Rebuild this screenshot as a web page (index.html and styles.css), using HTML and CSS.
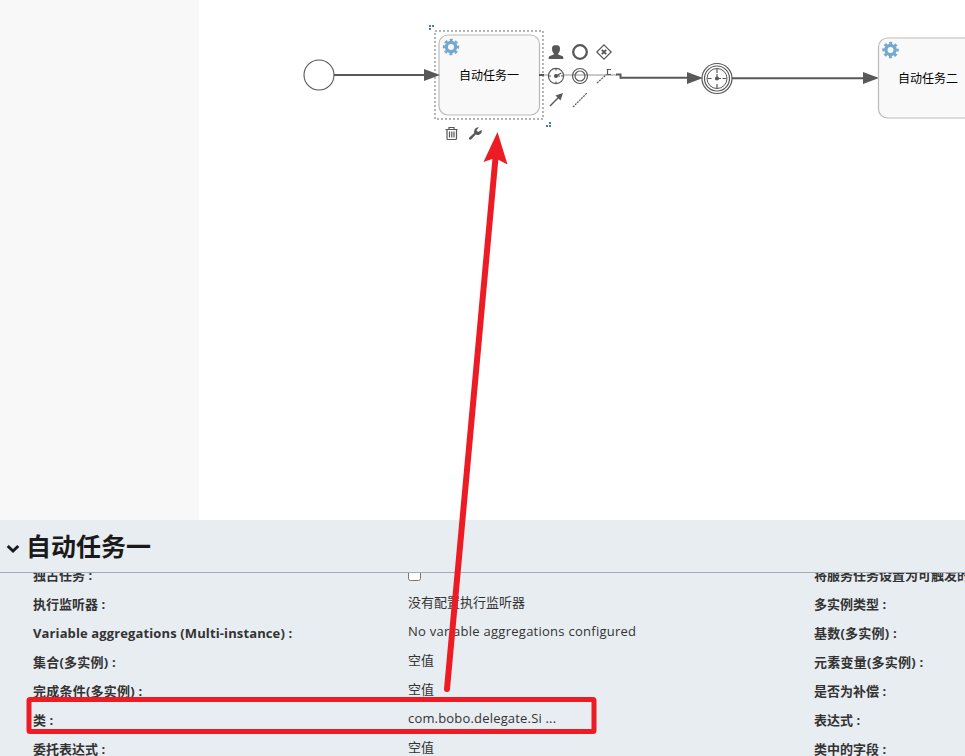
FILE: index.html
```
<!DOCTYPE html>
<html lang="zh-CN">
<head>
<meta charset="utf-8">
<title>自动任务一</title>
<link rel="stylesheet" href="styles.css">
</head>
<body>
<div class="editor">
  <main class="workspace">
    <aside class="palette"></aside>
    <svg class="canvas" viewBox="199 0 766 520" width="766" height="520">
      <defs>
        <g id="gear" fill="none" stroke="#72a7d0">
          <circle r="4.6" stroke-width="3.2"/>
          <circle r="7" stroke-width="2.4" stroke-dasharray="3 2.498" stroke-dashoffset="1.5"/>
        </g>
      </defs>
      <circle cx="319" cy="75" r="15" fill="#fff" stroke="#585858" stroke-width="1.1"/>
      <rect x="439" y="35" width="100.500" height="80" rx="9" class="task"/>
      <rect x="435" y="31" width="108" height="88" class="selection"/>
      <path d="M544 75h73" stroke="#b9b9b9" stroke-width="1.6"/>
      <g class="flow">
        <path d="M334 75H426M620 77.800H689M732 78.300H865"/>
        <path d="M424 69l16 6-16 6zM687 72l16 6-16 6zM863 72l16 6-16 6z" class="head"/>
        <path d="M539 75h5M616 74.600h4.500v4"/>
      </g>
      <use href="#gear" x="451" y="47"/>
      <text x="459" y="80">自动任务一</text>
      <path d="M429 25h2v2h-2zM432 25h2v2h-2zM429 28h2v2h-2zM549 122h2v2h-2zM546 125h2v2h-2zM549 125h2v2h-2z" fill="#4b7db5"/>
      <g class="thin">
        <circle cx="717" cy="78.500" r="15" fill="#fff"/>
        <circle cx="717" cy="78.500" r="12.500"/>
        <circle cx="717" cy="78.500" r="10" stroke-width="1"/>
        <path d="M717 69v4M717 84v4M707.500 78.500h4M722.500 78.500h4M717 74v4.500h4"/>
        <circle cx="717" cy="78.500" r="1.500" class="solid"/>
      </g>
      <rect x="878.500" y="38" width="100" height="80" rx="9" class="task"/>
      <use href="#gear" x="890.500" y="50"/>
      <text x="898" y="83">自动任务二</text>
      <g class="thin">
        <path class="solid" stroke="none" d="M556 45c-2.800 0-4.300 1.600-4 4.200.1 2 .8 3.200 1.800 4.200v1.200l-4 1.500c-.8.400-1.200 1-1.200 2.900h14.800c0-1.900-.4-2.500-1.200-2.900l-4-1.500v-1.200c1-1 1.700-2.200 1.800-4.200.3-2.600-1.200-4.200-4-4.200z"/>
        <circle cx="580" cy="52" r="6.800" stroke-width="2.300"/>
        <path d="M604 44.800l7.200 7.200-7.200 7.200-7.200-7.200z"/>
        <path d="M601.800 49.800l4.400 4.400M606.200 49.800l-4.400 4.400" stroke-width="1.900"/>
        <circle cx="556" cy="76" r="7.600" fill="#fff"/>
        <path d="M556 68.500v2M556 81.500v2M548.500 76h2.500M561 76h2.500M556 76l5.300-3M556 76h4"/>
        <circle cx="556" cy="76" r="1.500" class="solid"/>
        <circle cx="580" cy="76" r="7.500"/>
        <circle cx="580" cy="76" r="5"/>
        <path d="M597 83l9.500-8.500" stroke-dasharray="2 1"/>
        <path d="M611 69.500h-3.500v5h3.500"/>
        <path d="M550 106l9-9" stroke-width="1.400"/>
        <path class="solid" stroke="none" d="M563 93l-2.500 7.500-5-5z"/>
        <path d="M573 107l14-14" stroke-dasharray="2 .9"/>
        <path d="M445.500 129.500h12M449 129v-1.500h5v1.500M447 130v8.500q0 1 1 1h7.500q1 0 1-1V130M449.500 131.500v6M451.800 131.500v6M454 131.500v6"/>
        <path class="solid" stroke="none" d="M479 127.200l-2.500 3 1.600 1.700 3.600-1.800c.7 2.600-1.300 5-4 5-.8 0-1.500-.2-2-.5l-4.400 4.700c-1.300 1.300-3.200-.4-2-1.700l4.900-4.500c-.7-3.300 1.600-6.300 4.800-5.900z"/>
      </g>
    </svg>
  </main>
  <section class="panel">
    <header class="panel-head">
      <svg class="chevron" viewBox="0 0 14 10" width="14" height="10"><path d="M1.700 2l5.300 5 5.300-5" fill="none" stroke="#1a1a1a" stroke-width="3"/></svg>
      <h1>自动任务一</h1>
    </header>
    <div class="panel-body">
      <dl class="props">
        <dt>独占任务 :</dt><dd><input type="checkbox" aria-label="独占任务"></dd><dt>将服务任务设置为可触发的 :</dt>
        <dt>执行监听器 :</dt><dd>没有配置执行监听器</dd><dt>多实例类型 :</dt>
        <dt class="latin">Variable aggregations (Multi-instance) :</dt><dd class="sentence">No variable aggregations configured</dd><dt class="wide">基数(多实例) :</dt>
        <dt class="wide">集合(多实例) :</dt><dd>空值</dd><dt class="wide">元素变量(多实例) :</dt>
        <dt class="wide">完成条件(多实例) :</dt><dd>空值</dd><dt>是否为补偿 :</dt>
        <dt>类 :</dt><dd class="class-name">com.bobo.delegate.Si ...</dd><dt>表达式 :</dt>
        <dt>委托表达式 :</dt><dd>空值</dd><dt>类中的字段 :</dt>
      </dl>
    </div>
  </section>
  <svg class="markup" viewBox="0 0 965 756" width="965" height="756">
    <rect x="29" y="699.500" width="565" height="32" rx="1"/>
    <path d="M447 689L495.500 158" stroke-width="6" stroke-linecap="round"/>
    <path class="tip" d="M497.500 132L483.500 162l11.500-4 12.500 6.500z"/>
  </svg>
</div>
</body>
</html>
```
FILE: styles.css
```
* { box-sizing: border-box; }
body {
  margin: 0;
  overflow: hidden;
  background: #fff;
  color: #333;
  font: 13px/29px "Open Sans", "Noto Sans CJK SC", sans-serif;
}
.editor {
  position: relative;
  display: flex;
  flex-direction: column;
  height: 756px;
  overflow: hidden;
}
.workspace { display: flex; height: 520px; flex: none; }
.palette { width: 199px; background: #f8f8f8; }
.canvas { display: block; flex: none; }
.canvas text { font: 12px "Noto Sans CJK SC", sans-serif; fill: #000; }
.flow path { fill: none; stroke: #585858; stroke-width: 2; }
.flow .head { fill: #585858; stroke: none; }
.task { fill: #f9f9f9; stroke: #bbb; stroke-width: 1.2; }
.selection { fill: none; stroke: #b5b5b5; stroke-width: 2; stroke-dasharray: 2 2; }
.thin { fill: none; stroke: #585858; stroke-width: 1.2; }
.thin .solid { fill: #585858; }
.panel {
  display: flex;
  flex-direction: column;
  flex: 1;
  min-height: 0;
  background: #e8edf1;
}
.panel-head {
  display: flex;
  align-items: center;
  gap: 6px;
  height: 53px;
  flex: none;
  padding: 0 0 0 6px;
  border-bottom: 1px solid #a4acb9;
}
.chevron { margin-top: 6px; }
h1 { margin: 0; font-size: 25px; line-height: 36px; color: #1a1a1a; }
.panel-body { flex: 1; overflow: hidden; }
.props {
  display: grid;
  grid-template-columns: 375px 406px 220px;
  grid-auto-rows: 29px;
  margin: -12px 0 0;
  padding-left: 33px;
}
dt { font-weight: 700; white-space: nowrap; }
dt.latin { letter-spacing: 0.12px; }
dt.wide { letter-spacing: 0.22px; }
dd { margin: -2px 0 0; }
dd.sentence { letter-spacing: 0.26px; }
dd.class-name { letter-spacing: 0.18px; }
dd input { display: block; width: 13px; height: 13px; margin: 9px 0 0; }
.markup {
  position: absolute;
  inset: 0;
  fill: none;
  stroke: #ed1c24;
  stroke-width: 5;
  pointer-events: none;
}
.markup .tip { fill: #ed1c24; stroke: none; }
```
